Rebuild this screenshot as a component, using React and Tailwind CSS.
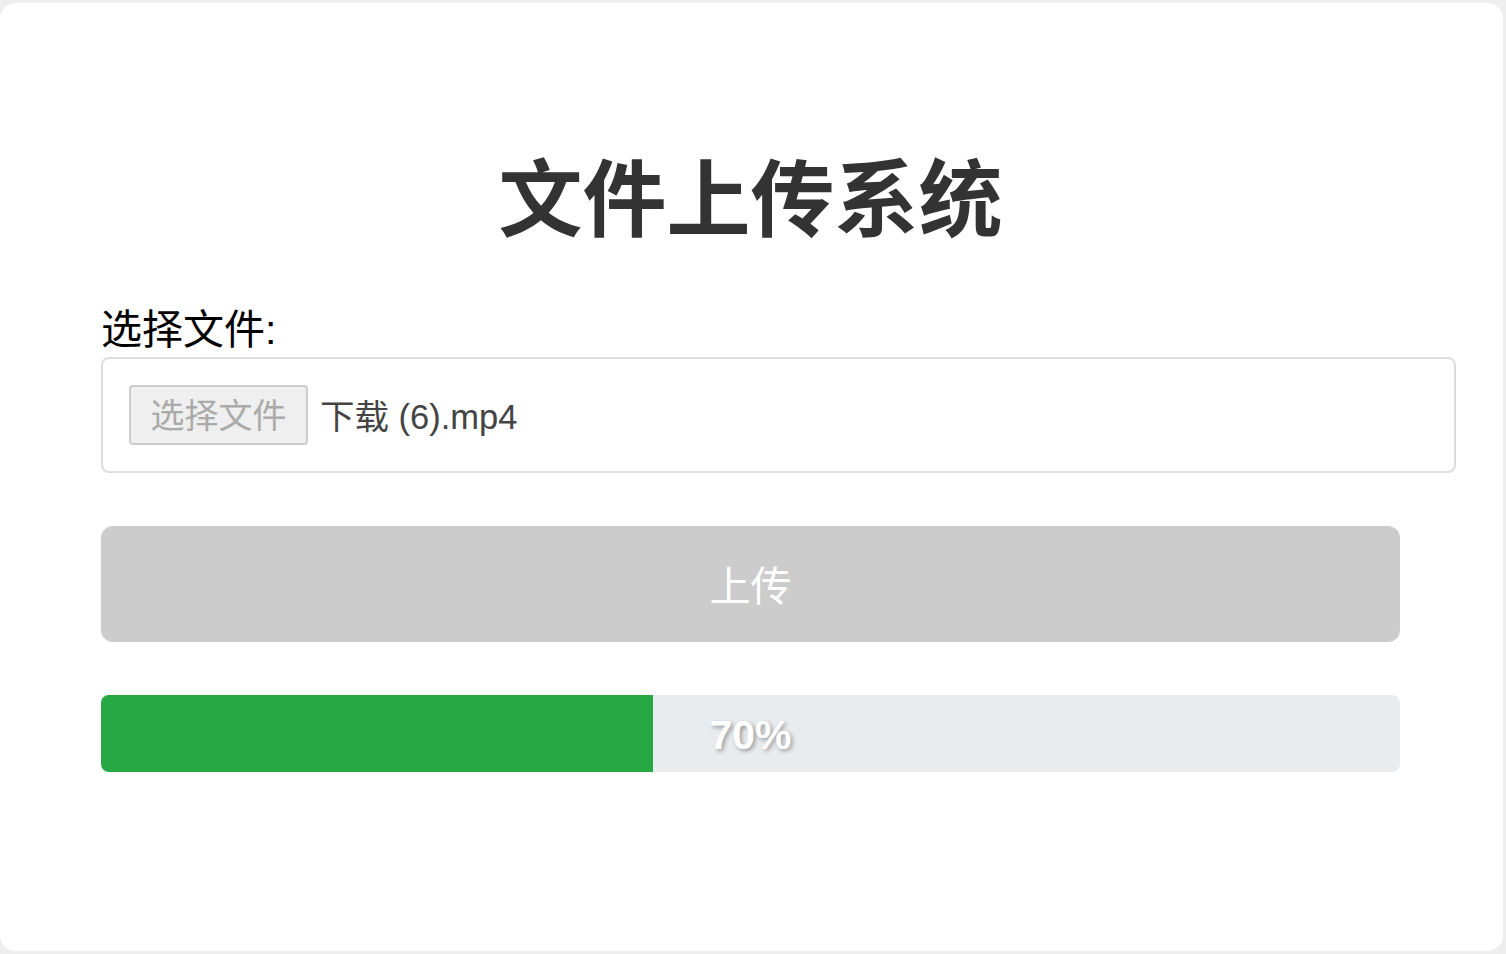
const cjk = "font-['Liberation_Sans','Noto_Sans_CJK_SC',sans-serif]";

const App = () => {
  return (
    <div className="min-h-screen bg-[#eeeeee] pt-[3px]">
      <div className={`w-[1503px] h-[948px] bg-white rounded-[16px] overflow-hidden ${cjk}`}>
        <div className="w-[1299px] ml-[101px]">
          <h1 className="mt-[156px] h-[84px] leading-[84px] text-center text-[84px] font-bold text-[#333333]">
            文件上传系统
          </h1>

          <div className="mt-[67px] h-[41px] leading-[41px] text-[41px] text-black">选择文件:</div>

          <div className="mt-[6px] w-[1355px] h-[116px] border-2 border-[#dddddd] rounded-[8px] flex items-center pl-[26px]">
            <div className="w-[179px] h-[60px] pt-[3px] bg-[#efefef] border-2 border-[#cccccc] rounded-[4px] flex items-center justify-center text-[34px] text-[#aaaaaa]">
              选择文件
            </div>
            <span className="ml-[12px] pt-[6px] text-[34.5px] text-[#444444]">下载 (6).mp4</span>
          </div>

          <button className="mt-[53px] block w-full h-[116px] pt-[7px] bg-[#cccccc] rounded-[12px] text-white text-[41px]">
            上传
          </button>

          <div className="relative mt-[53px] w-full h-[77px] bg-[#e9ecef] rounded-[8px] overflow-hidden">
            <div className="h-full w-[552px] bg-[#28a745]" />
            <div className="absolute inset-0 pt-[4px] flex items-center justify-center text-white font-bold text-[41px] [text-shadow:2px_2px_4px_rgba(0,0,0,0.35)]">
              70%
            </div>
          </div>
        </div>
      </div>
    </div>
  );
};

export default App;
